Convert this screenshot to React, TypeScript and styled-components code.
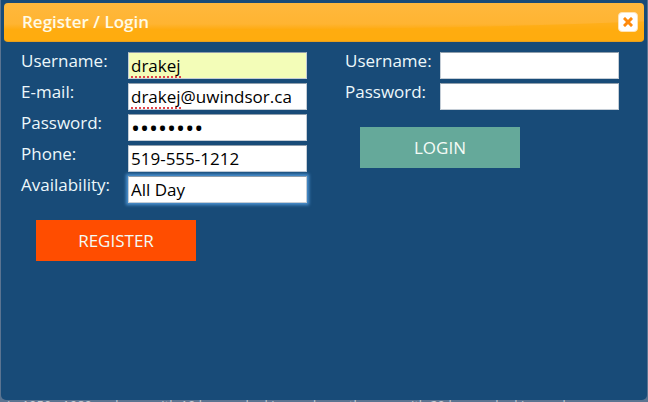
import React from "react";
import styled, { createGlobalStyle } from "styled-components";

const GlobalStyle = createGlobalStyle`
  * { box-sizing: border-box; }
  body {
    margin: 0;
    background: #5b7491;
    font-family: "Trebuchet MS", "Open Sans", "Noto Sans", sans-serif;
    font-size: 17px;
    overflow: hidden;
  }
`;

const Page = styled.div`
  display: flex;
  flex-direction: column;
  min-height: 100vh;
`;

const Dialog = styled.section`
  flex: 1;
  margin: 0 1px;
  padding: 3px;
  background: #184b78;
  border-radius: 0 0 5px 5px;
`;

const TitleBar = styled.header`
  position: relative;
  display: flex;
  align-items: center;
  justify-content: space-between;
  height: 39px;
  padding: 0 6px 0 18px;
  overflow: hidden;
  border-radius: 4px;
  background: linear-gradient(#ffb83c, #ffb432 55%, #ffab10 70%, #ffaa0c);
  border-bottom: 1px solid #e99f1c;
`;

const Gloss = styled.svg`
  position: absolute;
  inset: 0;
  width: 100%;
  height: 100%;
`;

const Title = styled.h1`
  position: relative;
  margin: 0;
  color: #fffbe6;
  font-size: 17px;
  line-height: 24px;
  font-weight: 600;
`;

const CloseButton = styled.button`
  position: relative;
  display: grid;
  place-items: center;
  width: 20px;
  height: 20px;
  padding: 0;
  border: 1px solid #ffe3b5;
  border-radius: 4px;
  background: #fff;
  cursor: pointer;
`;

const Panels = styled.div`
  display: flex;
  justify-content: space-between;
  padding: 7px 25px 0 17px;
`;

const Form = styled.form`
  min-width: 0;
`;

const Row = styled.div<{ $labelWidth: number }>`
  display: grid;
  grid-template-columns: ${(p) => p.$labelWidth}px 179px;
  align-items: start;
  height: 31px;
`;

const Label = styled.label`
  color: #edf8fb;
  line-height: 24px;
`;

const Control = styled.div`
  position: relative;
  padding-top: 3px;
`;

const Input = styled.input<{ $filled?: boolean; $active?: boolean }>`
  display: block;
  width: 100%;
  height: 27px;
  padding: 0 2px;
  border: 1px solid #c4cdd6;
  border-top-color: #8f9eac;
  border-radius: 0;
  outline: none;
  background: ${(p) => (p.$filled ? "#f3fdb8" : "#fff")};
  color: #000;
  font: inherit;
  line-height: 24px;
  box-shadow: ${(p) => (p.$active ? "0 0 3px 2px #4b91cf" : "none")};

  &[type="password"] {
    font-size: 24px;
  }
`;

const SpellMark = styled.span`
  position: absolute;
  left: 3px;
  bottom: 1px;
  width: 50px;
  border-bottom: 2px dotted #e2444a;
  pointer-events: none;
`;

const Submit = styled.button<{ $color: string }>`
  display: block;
  width: 160px;
  height: 41px;
  margin: 16px 0 0 15px;
  padding: 0;
  border: 0;
  background: ${(p) => p.$color};
  color: #f4fbf6;
  font: inherit;
  cursor: pointer;
`;

const Backdrop = styled.footer`
  height: 2px;
  overflow: hidden;
  padding: 0 7px;
  color: #c3cbd2;
  font-size: 13px;
  line-height: 10px;
  white-space: nowrap;
`;

interface FieldProps {
  id: string;
  label: string;
  labelWidth: number;
  type?: string;
  value?: string;
  filled?: boolean;
  active?: boolean;
  marked?: boolean;
}

function Field({ id, label, labelWidth, type = "text", value = "", filled, active, marked }: FieldProps) {
  return (
    <Row $labelWidth={labelWidth}>
      <Label htmlFor={id}>{label}</Label>
      <Control>
        <Input id={id} type={type} defaultValue={value} $filled={filled} $active={active} spellCheck={false} />
        {marked && <SpellMark />}
      </Control>
    </Row>
  );
}

const stay = (e: React.FormEvent) => e.preventDefault();

export default function App() {
  return (
    <Page>
      <GlobalStyle />
      <Dialog role="dialog" aria-labelledby="dialog-title">
        <TitleBar>
          <Gloss viewBox="0 0 640 39" preserveAspectRatio="none" aria-hidden="true">
            <path d="M0 28 C220 28 420 28 640 19 V39 H0 Z" fill="#ffac10" opacity="0.7" />
          </Gloss>
          <Title id="dialog-title">Register / Login</Title>
          <CloseButton type="button" aria-label="Close">
            <svg width="10" height="10" viewBox="0 0 10 10" aria-hidden="true">
              <path d="M2 2 L8 8 M8 2 L2 8" stroke="#ff8a0c" strokeWidth="3" strokeLinecap="square" />
            </svg>
          </CloseButton>
        </TitleBar>
        <Panels>
          <Form onSubmit={stay}>
            <Field id="reg-user" label="Username:" labelWidth={107} value="drakej" filled marked />
            <Field id="reg-mail" label="E-mail:" labelWidth={107} value="drakej@uwindsor.ca" marked />
            <Field id="reg-pass" label="Password:" labelWidth={107} type="password" value="password" />
            <Field id="reg-phone" label="Phone:" labelWidth={107} value="519-555-1212" />
            <Field id="reg-avail" label="Availability:" labelWidth={107} value="All Day" active />
            <Submit type="submit" $color="#ff4d00">REGISTER</Submit>
          </Form>
          <Form onSubmit={stay}>
            <Field id="log-user" label="Username:" labelWidth={95} />
            <Field id="log-pass" label="Password:" labelWidth={95} type="password" />
            <Submit type="submit" $color="#65a99a">LOGIN</Submit>
          </Form>
        </Panels>
      </Dialog>
      <Backdrop>
        in 1950 - 1980 and now with 10 houses looking and now the new with 20 houses looking and now
      </Backdrop>
    </Page>
  );
}
